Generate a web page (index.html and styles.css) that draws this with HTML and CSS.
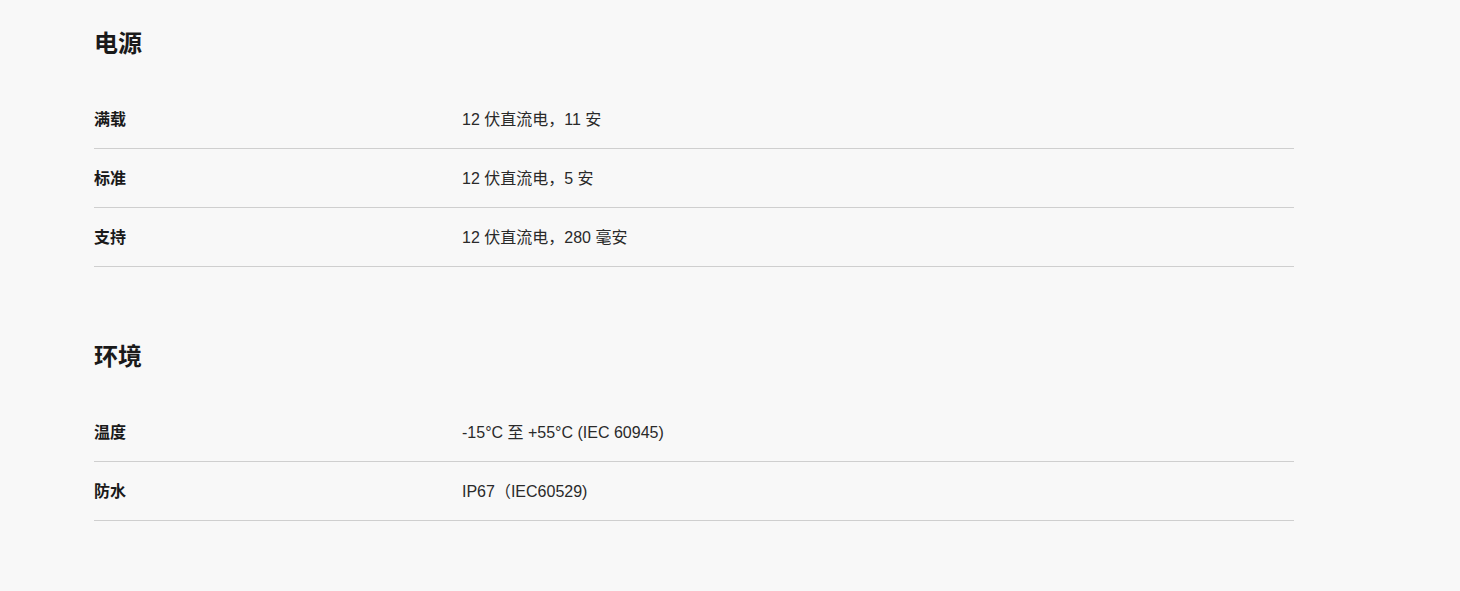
FILE: index.html
```html
<!DOCTYPE html>
<html lang="zh-CN">
<head>
<meta charset="utf-8">
<title>规格</title>
<link rel="stylesheet" href="styles.css">
</head>
<body>
<main class="specs">
  <section class="spec-section">
    <h2 class="spec-title">电源</h2>
    <div class="spec-row"><div class="spec-label">满载</div><div class="spec-value">12 伏直流电，11 安</div></div>
    <div class="spec-row"><div class="spec-label">标准</div><div class="spec-value">12 伏直流电，5 安</div></div>
    <div class="spec-row"><div class="spec-label">支持</div><div class="spec-value">12 伏直流电，280 毫安</div></div>
  </section>
  <section class="spec-section">
    <h2 class="spec-title">环境</h2>
    <div class="spec-row"><div class="spec-label">温度</div><div class="spec-value">-15°C 至 +55°C (IEC 60945)</div></div>
    <div class="spec-row"><div class="spec-label">防水</div><div class="spec-value">IP67（IEC60529)</div></div>
  </section>
</main>
</body>
</html>
```
FILE: styles.css
```css
html, body {
  margin: 0;
  padding: 0;
  background: #f8f8f8;
}
body {
  font-family: "Liberation Sans", Arial, "Noto Sans CJK SC", sans-serif;
  color: #222;
}
.specs {
  width: 1200px;
  margin-left: 94px;
  padding-top: 28px;
}
.spec-section {
  margin-bottom: 74px;
}
.spec-title {
  margin: 0 0 30px;
  font-size: 24px;
  line-height: 32px;
  font-weight: 700;
  color: #1a1a1a;
}
.spec-row {
  display: grid;
  grid-template-columns: 368px 1fr;
  padding: 20px 0 18px;
  line-height: 20px;
  font-size: 16px;
  border-bottom: 1px solid #cfcfcf;
}
.spec-label {
  font-weight: 700;
  color: #1a1a1a;
}
.spec-value {
  color: #2a2a2a;
}
```
